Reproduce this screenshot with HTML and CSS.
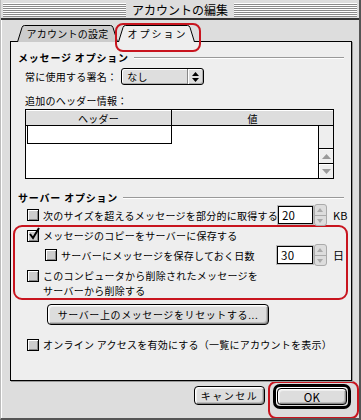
FILE: index.html
```html
<!DOCTYPE html>
<html lang="ja">
<head>
    <meta charset="UTF-8">
    <title>アカウントの編集</title>
    <link rel="stylesheet" href="styles.css">
</head>
<body>

    <div class="window">
        <div class="titlebar">
            <div class="stripes"><span class="title">アカウントの編集</span></div>
        </div>

        <div class="tabs">
            <div class="tab">
                <svg class="tab-shape" width="101" height="17" viewBox="0 0 101 17">
                    <path d="M0.5,17 L5,2.5 Q5.6,0.5 7.5,0.5 L93.5,0.5 Q95.4,0.5 96,2.5 L100.5,17" fill="#cccccc" stroke="#000"/>
                </svg>
                <span class="tab-label">アカウントの設定</span>
            </div>
            <div class="tab tab-active">
                <svg class="tab-shape" width="77" height="18" viewBox="0 0 77 18">
                    <path d="M0.5,18 L0.5,17 L5,2.5 Q5.6,0.5 7.5,0.5 L69.5,0.5 Q71.4,0.5 72,2.5 L76.5,17 L76.5,18 Z" fill="#eeeeee" stroke="none"/>
                    <path d="M0.5,17 L5,2.5 Q5.6,0.5 7.5,0.5 L69.5,0.5 Q71.4,0.5 72,2.5 L76.5,17" fill="none" stroke="#000"/>
                </svg>
                <span class="tab-label">オプション</span>
            </div>
        </div>

        <div class="panel">
            <div class="group-title">メッセージ オプション</div>

            <div class="sig-row">
                <span>常に使用する署名：</span>
                <div class="popup">
                    <span class="popup-value">なし</span>
                    <span class="popup-arrows">
                        <svg width="7" height="10" viewBox="0 0 7 10">
                            <path d="M3.5,0 L7,4 L0,4 Z M0,6 L7,6 L3.5,10 Z" fill="#000"/>
                        </svg>
                    </span>
                </div>
            </div>

            <div class="label-line">追加のヘッダー情報：</div>

            <div class="header-table">
                <div class="table-head">
                    <div class="th th-name">ヘッダー</div>
                    <div class="th th-value">値</div>
                </div>
                <div class="table-body">
                    <div class="cells">
                        <div class="cell-edit"></div>
                    </div>
                    <div class="scrollbar">
                        <div class="scroll-track"></div>
                        <div class="scroll-btn">
                            <svg width="9" height="5" viewBox="0 0 9 5"><path d="M4.5,0 L9,5 L0,5 Z" fill="#999"/></svg>
                        </div>
                        <div class="scroll-btn">
                            <svg width="9" height="5" viewBox="0 0 9 5"><path d="M0,0 L9,0 L4.5,5 Z" fill="#999"/></svg>
                        </div>
                    </div>
                </div>
            </div>

            <div class="group-title group-server">サーバー オプション</div>

            <div class="opt-row">
                <span class="checkbox"></span>
                <span class="opt-label">次のサイズを超えるメッセージを部分的に取得する</span>
                <span class="num-field">20</span>
                <span class="stepper"><span class="step-up"></span><span class="step-down"></span></span>
                <span class="unit">KB</span>
            </div>

            <div class="highlight-box">
                <div class="opt-row opt-row-plain">
                    <span class="checkbox is-checked">
                        <svg class="check" width="13" height="14" viewBox="0 0 13 14">
                            <path d="M2,7 L5,11 L11,1" fill="none" stroke="#000" stroke-width="2"/>
                        </svg>
                    </span>
                    <span class="opt-label">メッセージのコピーをサーバーに保存する</span>
                </div>
                <div class="opt-row opt-row-sub">
                    <span class="checkbox"></span>
                    <span class="opt-label">サーバーにメッセージを保存しておく日数</span>
                    <span class="num-field">30</span>
                    <span class="stepper"><span class="step-up"></span><span class="step-down"></span></span>
                    <span class="unit">日</span>
                </div>
                <div class="opt-row opt-row-wrap">
                    <span class="checkbox"></span>
                    <span class="opt-label">このコンピュータから削除されたメッセージを<br>サーバーから削除する</span>
                </div>
            </div>

            <div class="reset-row">
                <button class="mac-button reset-button">サーバー上のメッセージをリセットする...</button>
            </div>

            <div class="opt-row opt-row-plain online-row">
                <span class="checkbox"></span>
                <span class="opt-label">オンライン アクセスを有効にする（一覧にアカウントを表示）</span>
            </div>
        </div>

        <div class="dialog-buttons">
            <button class="mac-button cancel-button">キャンセル</button>
            <div class="ok-mark">
                <div class="default-ring">
                    <button class="mac-button ok-button">OK</button>
                </div>
            </div>
        </div>
    </div>

</body>
</html>
```

FILE: styles.css
```css
body {
    margin: 0;
    background-color: #fff;
    font-family: "Noto Sans CJK JP", "Noto Sans", sans-serif;
    font-size: 10px;
    letter-spacing: 0.25px;
    color: #000;
}

.window {
    width: 361px;
    height: 420px;
    box-sizing: border-box;
    background-color: #dddddd;
    border-left: 1px solid #bbb;
    border-right: 2px solid #555;
    border-bottom: 2px solid #555;
    box-shadow: inset 1px 0 0 #fff;
    overflow: hidden;
}

/* --- Barra de título --- */
.titlebar {
    height: 20px;
    padding: 3px 2px 0 2px;
    box-sizing: border-box;
    border-bottom: 2px solid #333;
    background-color: #dddddd;
}

.stripes {
    height: 14px;
    display: flex;
    justify-content: center;
    background: repeating-linear-gradient(to bottom, #fff 0, #fff 1px, #8a8a8a 1px, #8a8a8a 2px);
}

.title {
    background-color: #dddddd;
    padding: 0 6px;
    font-size: 12px;
    letter-spacing: 0;
    line-height: 14px;
}

/* --- Abas --- */
.tabs {
    display: flex;
    height: 17px;
    margin: 5px 0 -1px 16px;
    position: relative;
    z-index: 2;
}

.tab {
    position: relative;
    width: 101px;
    height: 17px;
    display: flex;
    justify-content: center;
    align-items: center;
}

.tab-shape {
    position: absolute;
    left: 0;
    top: 0;
}

.tab-label {
    position: relative;
    line-height: 14px;
    margin-top: 1px;
}

.tab-active {
    width: 77px;
    height: 18px;
    align-items: flex-start;
}

.tab-active .tab-label {
    letter-spacing: 2px;
    margin-top: 2px;
    margin-left: 2px;
}

/* destaque vermelho */
.tab-active::after {
    content: '';
    position: absolute;
    left: -3px;
    top: -2px;
    width: 82px;
    height: 25px;
    border: 2px solid #c8141e;
    border-radius: 8px;
}

/* --- Painel --- */
.panel {
    position: relative;
    z-index: 1;
    margin-left: 9px;
    width: 342px;
    height: 340px;
    box-sizing: border-box;
    border: 1px solid #000;
    background-color: #eeeeee;
    box-shadow: 1px 1px 0 #999;
    padding-top: 9px;
}

.group-title {
    display: flex;
    align-items: center;
    height: 14px;
    line-height: 14px;
    margin: 0 7px;
    font-weight: bold;
    letter-spacing: 0.8px;
}

.group-title::after {
    content: '';
    flex: 1;
    margin-left: 5px;
    margin-top: -1px;
    border-top: 1px solid #999;
    border-bottom: 1px solid #fff;
}

.sig-row {
    display: flex;
    align-items: center;
    height: 17px;
    margin-top: 3px;
    padding-left: 14px;
}

.popup {
    display: flex;
    margin-left: 4px;
    width: 83px;
    height: 17px;
    box-sizing: border-box;
    border: 1px solid #000;
    border-radius: 3px;
    background-color: #dedede;
    box-shadow: inset 1px 1px 0 #fff, inset -1px -1px 0 #aaa;
}

.popup-value {
    flex: 1;
    padding-left: 5px;
    line-height: 15px;
}

.popup-arrows {
    width: 15px;
    display: flex;
    justify-content: center;
    align-items: center;
    border-left: 1px solid #888;
    box-shadow: inset 1px 0 0 #fff;
}

.label-line {
    margin-top: 9px;
    padding-left: 14px;
    line-height: 14px;
}

/* --- Tabela de cabeçalhos --- */
.header-table {
    margin: 1px 0 0 14px;
    width: 309px;
    height: 70px;
    box-sizing: border-box;
    border: 1px solid #000;
    background-color: #fff;
    display: flex;
    flex-direction: column;
}

.table-head {
    display: flex;
    height: 15px;
    border-bottom: 1px solid #000;
    background-color: #dddddd;
    box-shadow: inset 0 1px 0 #fff;
}

.th {
    text-align: center;
    line-height: 17px;
    height: 15px;
    overflow: hidden;
}

.th-name {
    width: 145px;
    border-right: 1px solid #000;
}

.th-value {
    flex: 1;
}

.table-body {
    flex: 1;
    display: flex;
}

.cells {
    flex: 1;
}

.cell-edit {
    width: 145px;
    height: 18px;
    box-sizing: border-box;
    margin-left: 1px;
    border: 1px solid #000;
    border-top: none;
}

.scrollbar {
    width: 14px;
    border-left: 1px solid #000;
    background-color: #eeeeee;
    display: flex;
    flex-direction: column;
}

.scroll-track {
    flex: 1;
}

.scroll-btn {
    height: 14px;
    border-top: 1px solid #000;
    display: flex;
    justify-content: center;
    align-items: center;
    background-color: #eeeeee;
    box-shadow: inset 1px 1px 0 #fff;
}

/* --- Opções do servidor --- */
.group-server {
    margin-top: 12px;
}

.opt-row {
    display: flex;
    align-items: center;
    height: 20px;
    padding: 0 5px 0 16px;
}

.opt-row-plain {
    height: 15px;
    padding-left: 12px;
}

.opt-row-sub {
    margin-top: 2px;
    padding-left: 30px;
    padding-right: 0;
}

.opt-row-wrap {
    align-items: flex-start;
    height: 30px;
    margin-top: 3px;
    padding-left: 12px;
}

.opt-row-wrap .checkbox {
    margin-top: 2px;
}

.opt-label {
    flex: 1;
    margin-left: 4px;
    line-height: 15px;
    white-space: nowrap;
}

.checkbox {
    position: relative;
    width: 12px;
    height: 12px;
    box-sizing: border-box;
    border: 1px solid #000;
    background-color: #cccccc;
    box-shadow: inset 1px 1px 0 #fff, inset -1px -1px 0 #888;
    flex: none;
}

.check {
    position: absolute;
    left: 0;
    top: -4px;
}

.num-field {
    width: 36px;
    height: 18px;
    box-sizing: border-box;
    border: 1px solid #000;
    box-shadow: 0 0 0 1px #bbb;
    background-color: #fff;
    padding-left: 3px;
    font-size: 11.5px;
    line-height: 16px;
}

.stepper {
    display: flex;
    flex-direction: column;
    width: 13px;
    height: 22px;
    margin-left: 1px;
    box-sizing: border-box;
    border: 1px solid #aaa;
    border-radius: 3px;
    background-color: #dddddd;
    overflow: hidden;
}

.step-up,
.step-down {
    flex: 1;
    position: relative;
}

.step-down {
    border-top: 1px solid #aaa;
}

.step-up::before,
.step-down::before {
    content: '';
    position: absolute;
    left: 2px;
    border-left: 3.5px solid transparent;
    border-right: 3.5px solid transparent;
}

.step-up::before {
    top: 3px;
    border-bottom: 4px solid #aaa;
}

.step-down::before {
    top: 3px;
    border-top: 4px solid #aaa;
}

.unit {
    width: 13px;
    margin-left: 6px;
    line-height: 15px;
    font-size: 11px;
}

.highlight-box {
    margin: 0 0 0 2px;
    width: 335px;
    height: 75px;
    box-sizing: border-box;
    border: 2px solid #c8141e;
    border-radius: 9px;
    padding-top: 1px;
}

/* --- Botões --- */
.mac-button {
    font-family: inherit;
    font-size: 10px;
    letter-spacing: 0.25px;
    color: #000;
    border: 1px solid #000;
    border-radius: 4px;
    background-color: #dddddd;
    box-shadow: inset 1px 1px 0 #fff, inset 2px 2px 0 #eee, inset -1px -1px 0 #888, inset -2px -2px 0 #bbb;
    padding: 0;
    line-height: 16px;
}

.reset-row {
    margin-top: 4px;
    padding-left: 36px;
}

.reset-button {
    width: 222px;
    height: 21px;
    letter-spacing: 0.6px;
}

.online-row {
    margin-top: 12px;
    padding-left: 16px;
}

.dialog-buttons {
    display: flex;
    justify-content: flex-end;
    align-items: flex-start;
}

.cancel-button {
    width: 71px;
    height: 19px;
    margin-top: 5px;
    margin-right: 3px;
    letter-spacing: 1.5px;
}

.ok-mark {
    width: 91px;
    height: 38px;
    box-sizing: border-box;
    border: 2px solid #c8141e;
    border-radius: 8px;
    padding: 1px 0 0 3px;
}

.default-ring {
    width: 78px;
    height: 25px;
    box-sizing: border-box;
    border: 3px solid #000;
    border-radius: 7px;
    background-color: #dddddd;
    box-shadow: inset 1px 1px 0 #fff;
    display: flex;
    justify-content: center;
    align-items: center;
}

.ok-button {
    width: 70px;
    height: 17px;
    font-size: 11.5px;
}
```
